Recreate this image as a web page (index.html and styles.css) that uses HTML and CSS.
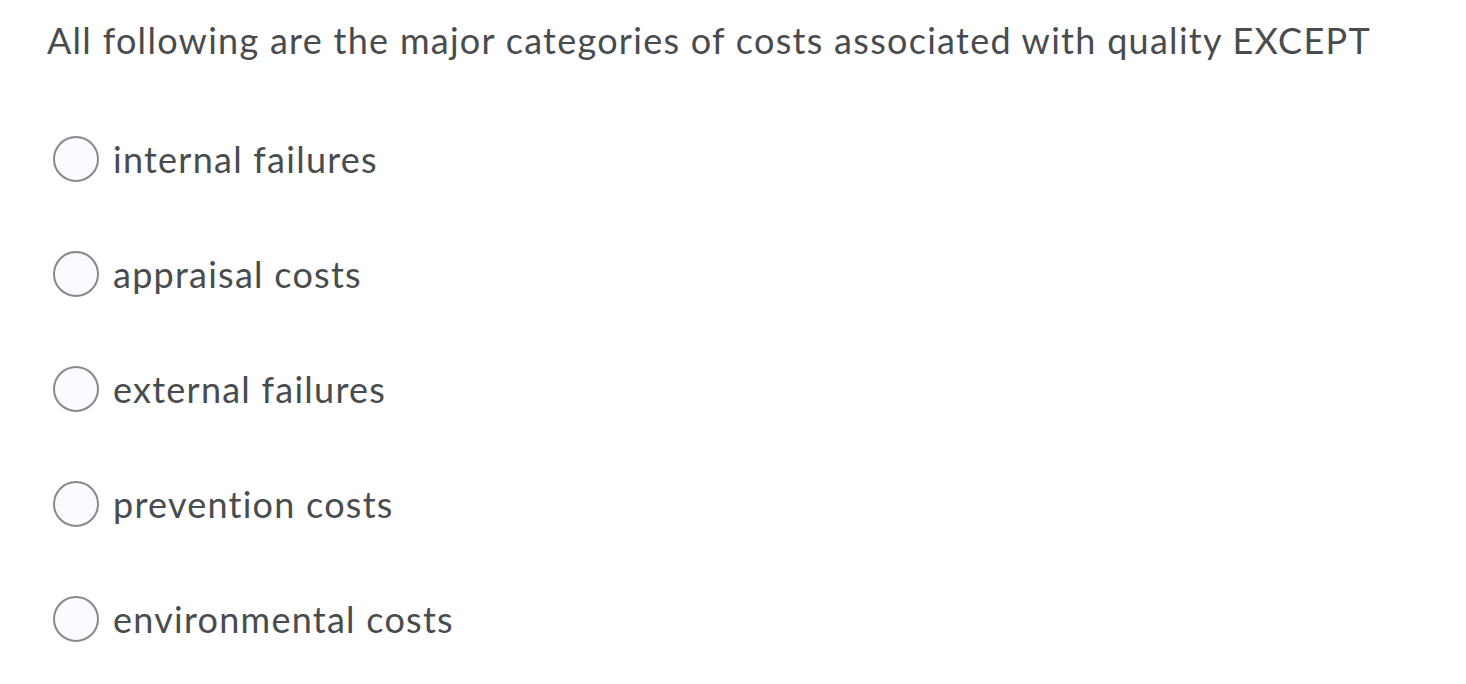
FILE: index.html
```html
<!DOCTYPE html>
<html lang="en">
<head>
<meta charset="utf-8">
<link rel="stylesheet" href="styles.css">
</head>
<body>
<div class="question">
  <p class="prompt">All following are the major categories of costs associated with quality EXCEPT</p>
  <ul class="options">
    <li class="option"><span class="radio"></span><span class="label">internal failures</span></li>
    <li class="option"><span class="radio"></span><span class="label">appraisal costs</span></li>
    <li class="option"><span class="radio"></span><span class="label">external failures</span></li>
    <li class="option"><span class="radio"></span><span class="label">prevention costs</span></li>
    <li class="option"><span class="radio"></span><span class="label">environmental costs</span></li>
  </ul>
</div>
</body>
</html>
```
FILE: styles.css
```css
html, body {
  margin: 0;
  padding: 0;
  background: #ffffff;
}
body {
  font-family: Lato, "Liberation Sans", sans-serif;
  color: #494c4e;
}
.question {
  padding: 16px 0 0 47px;
}
.prompt {
  margin: 0;
  font-size: 36px;
  line-height: 48px;
  letter-spacing: 1.28px;
}
.options {
  list-style: none;
  margin: 0;
  padding: 72px 0 0 6px;
  display: flex;
  flex-direction: column;
  gap: 69px;
}
.option {
  display: flex;
  align-items: center;
  gap: 14px;
  height: 46px;
}
.radio {
  box-sizing: border-box;
  width: 46px;
  height: 46px;
  border-radius: 50%;
  border: 2px solid #87898b;
  background: #f9fbff;
  flex: none;
}
.label {
  font-size: 36px;
  line-height: 46px;
  letter-spacing: 1.25px;
}
```
